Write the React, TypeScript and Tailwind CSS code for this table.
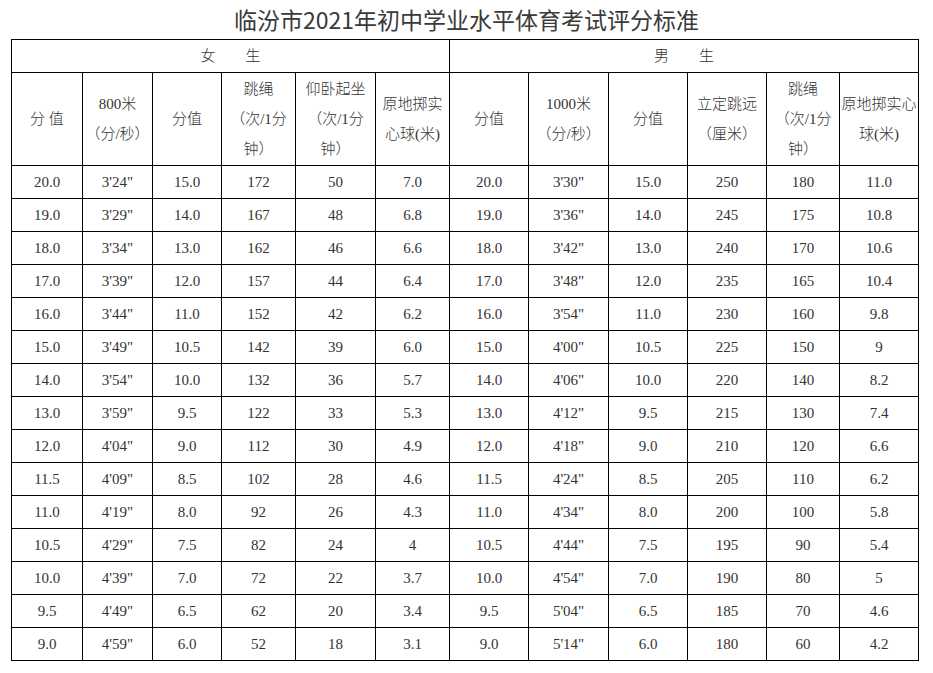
const female = [
  ["20.0", `3'24"`, "15.0", "172", "50", "7.0"],
  ["19.0", `3'29"`, "14.0", "167", "48", "6.8"],
  ["18.0", `3'34"`, "13.0", "162", "46", "6.6"],
  ["17.0", `3'39"`, "12.0", "157", "44", "6.4"],
  ["16.0", `3'44"`, "11.0", "152", "42", "6.2"],
  ["15.0", `3'49"`, "10.5", "142", "39", "6.0"],
  ["14.0", `3'54"`, "10.0", "132", "36", "5.7"],
  ["13.0", `3'59"`, "9.5", "122", "33", "5.3"],
  ["12.0", `4'04"`, "9.0", "112", "30", "4.9"],
  ["11.5", `4'09"`, "8.5", "102", "28", "4.6"],
  ["11.0", `4'19"`, "8.0", "92", "26", "4.3"],
  ["10.5", `4'29"`, "7.5", "82", "24", "4"],
  ["10.0", `4'39"`, "7.0", "72", "22", "3.7"],
  ["9.5", `4'49"`, "6.5", "62", "20", "3.4"],
  ["9.0", `4'59"`, "6.0", "52", "18", "3.1"],
];

const male = [
  ["20.0", `3'30"`, "15.0", "250", "180", "11.0"],
  ["19.0", `3'36"`, "14.0", "245", "175", "10.8"],
  ["18.0", `3'42"`, "13.0", "240", "170", "10.6"],
  ["17.0", `3'48"`, "12.0", "235", "165", "10.4"],
  ["16.0", `3'54"`, "11.0", "230", "160", "9.8"],
  ["15.0", `4'00"`, "10.5", "225", "150", "9"],
  ["14.0", `4'06"`, "10.0", "220", "140", "8.2"],
  ["13.0", `4'12"`, "9.5", "215", "130", "7.4"],
  ["12.0", `4'18"`, "9.0", "210", "120", "6.6"],
  ["11.5", `4'24"`, "8.5", "205", "110", "6.2"],
  ["11.0", `4'34"`, "8.0", "200", "100", "5.8"],
  ["10.5", `4'44"`, "7.5", "195", "90", "5.4"],
  ["10.0", `4'54"`, "7.0", "190", "80", "5"],
  ["9.5", `5'04"`, "6.5", "185", "70", "4.6"],
  ["9.0", `5'14"`, "6.0", "180", "60", "4.2"],
];

// column widths measured off the grid lines
const widths = [71, 70, 69, 74, 80, 74, 79, 80, 79, 79, 73, 79];

const cell = "border border-black text-center align-middle p-0";

const headers = [
  ["分 值"],
  ["800米", "（分/秒）"],
  ["分值"],
  ["跳绳", "（次/1分", "钟）"],
  ["仰卧起坐", "（次/1分", "钟）"],
  ["原地掷实", "心球(米)"],
  ["分值"],
  ["1000米", "（分/秒）"],
  ["分值"],
  ["立定跳远", "（厘米）"],
  ["跳绳", "（次/1分", "钟）"],
  ["原地掷实心", "球(米)"],
];

export default function App() {
  return (
    <div className="w-[933px] h-[673px] bg-white text-[#333] overflow-hidden [text-spacing-trim:space-all]">
      <h1 className="h-[39px] flex items-center justify-center text-[23px] leading-none font-normal font-['Noto_Sans_CJK_SC',sans-serif] text-[#3a3a3a]">
        临汾市2021年初中学业水平体育考试评分标准
      </h1>
      <table className="ml-[11px] w-[908px] table-fixed border-collapse border border-black text-[15px] font-['Liberation_Serif','Noto_Sans_CJK_SC',serif]">
        <colgroup>
          {widths.map((w, i) => (
            <col key={i} style={{ width: w }} />
          ))}
        </colgroup>
        <thead>
          <tr className="h-[33px]">
            <th colSpan={6} className={`${cell} font-light`}>
              女　　生
            </th>
            <th colSpan={6} className={`${cell} font-light`}>
              男　　生
            </th>
          </tr>
          <tr className="h-[93px]">
            {headers.map((lines, i) => (
              <th key={i} className={`${cell} font-light leading-[30px] whitespace-nowrap`}>
                {lines.map((l, j) => (
                  <div key={j}>{l}</div>
                ))}
              </th>
            ))}
          </tr>
        </thead>
        <tbody>
          {female.map((row, r) => (
            <tr key={r} className="h-[33px]">
              {[...row, ...male[r]].map((v, c) => (
                <td key={c} className={cell}>
                  {v}
                </td>
              ))}
            </tr>
          ))}
        </tbody>
      </table>
    </div>
  );
}
